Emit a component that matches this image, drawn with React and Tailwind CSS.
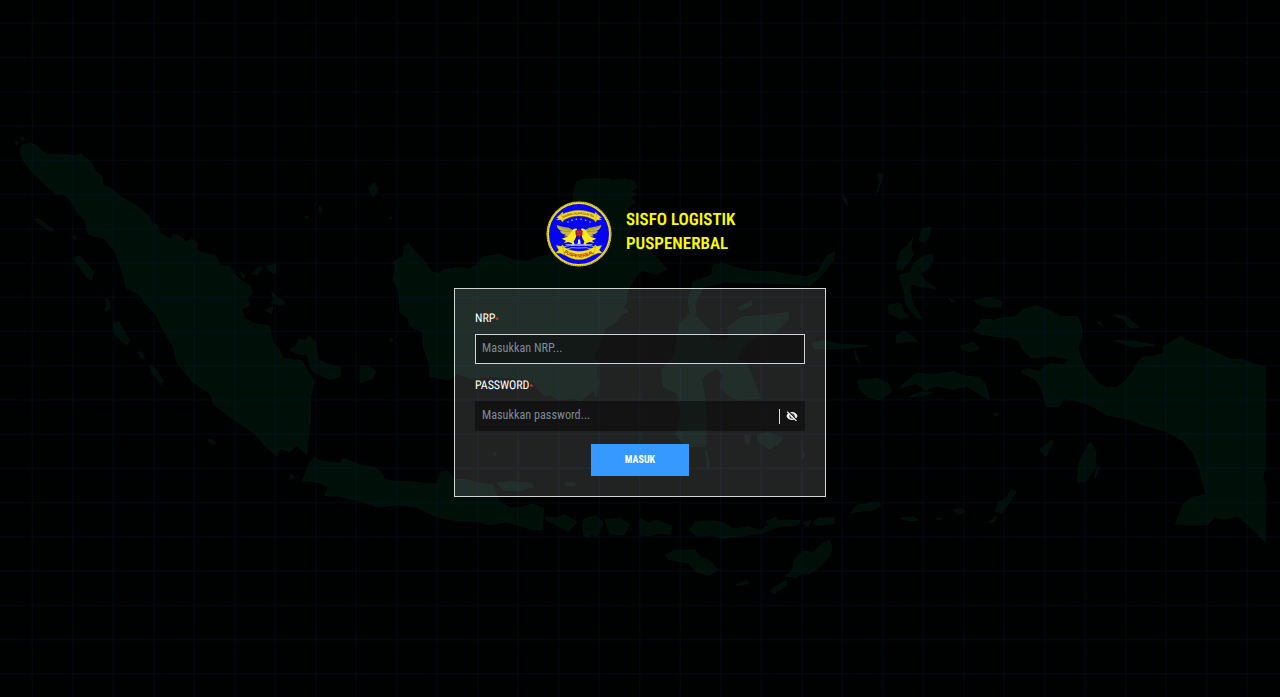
import React from "react";

const VERTICALS = Array.from({ length: 31 }, (_, i) => 32.3 + i * 40.5);
const HORIZONTALS = Array.from({ length: 20 }, (_, i) => 23.3 + i * 34.24);

/* Each region keeps its own origin; shapes inside are drawn at a third of their size. */
const REGIONS = [
  {
    name: "sumatra",
    x: 0,
    y: 120,
    shapes: [
      "M60 95L65 75L92 70L110 78L125 94L150 104L190 103L222 107L244 103L262 118L278 135L288 156L304 168L308 194L335 208L365 232L400 251L425 271L445 287L455 310L470 315L485 342L512 358L520 343L542 350L558 368L575 358L592 366L590 390L618 403L645 405L660 435L690 440L702 462L720 480L750 497L757 520L740 535L750 556L724 566L735 595L760 610L808 618L818 665L840 692L848 716L905 722L918 745L943 785L930 830L932 890L920 1003L890 975L870 995L842 985L830 1008L798 980L765 942L720 912L640 852L630 820L578 785L530 725L520 680L490 630L470 585L435 550L420 522L380 505L365 450L345 395L310 355L265 343L255 300L238 285L210 240L190 222L165 220L130 188L95 155L72 125Z",
      "M100 298L115 296L162 330L150 333Z",
      "M222 415L240 408L280 455L274 482L255 465Z",
      "M316 532L326 540L330 565L316 573L320 555Z",
      "M340 610L356 605L388 662L380 675L345 645Z",
      "M414 697L422 695L434 715L425 717Z",
      "M450 735L465 745L488 780L485 795L455 755Z",
      "M624 960L636 958L646 970L636 973Z",
      "M870 690L890 675L895 658L915 662L928 650L945 665L955 720L990 735L1022 742L1020 770L990 778L960 765L935 750L922 705L890 700Z",
      "M755 462L780 437L788 445L770 462ZM800 440L825 433L828 460L810 455ZM722 455L736 470L728 473ZM798 570L818 562L815 580ZM815 515L832 532L855 548L845 555L812 548L822 538Z",
      "M215 350L228 348L225 360ZM915 290L926 288L920 297ZM958 258L965 265L960 280ZM45 62L55 68L50 75ZM62 52L72 55L68 62Z",
    ],
  },
  {
    name: "natuna-and-kalimantan",
    x: 360,
    y: 160,
    shapes: [
      "M145 250L165 275L190 300L215 335L235 342L250 330L300 322L325 328L350 315L368 292L420 283L460 300L500 305L540 290L590 285L630 250L645 200L640 150L640 105L650 65L670 58L740 56L760 62L785 57L820 62L833 82L812 94L828 104L808 112L826 125L802 145L812 200L805 250L850 272L862 264L890 292L920 328L885 342L845 330L825 355L812 375L800 400L800 425L790 440L805 455L785 462L770 485L735 505L722 540L710 570L700 590L716 612L708 640L716 665L708 712L700 690L690 700L660 722L640 714L600 720L570 704L555 708L540 694L520 668L480 655L400 650L330 655L290 640L268 660L240 655L208 648L210 620L190 560L188 515L165 505L150 495L144 475L120 455L118 415L112 380L100 360L105 325L100 305L130 290L134 260Z",
      "M25 85L42 68L55 90L40 110Z",
      "M0 620L30 620L47 635L38 655L0 668Z",
      "M90 538L100 540L95 546ZM88 170L96 173L92 178Z",
    ],
  },
  {
    name: "sulawesi",
    x: 440,
    y: 180,
    shapes: [
      "M1185 215L1160 228L1135 275L1100 290L1040 283L1000 275L940 275L880 262L850 250L820 255L815 285L790 295L760 305L745 360L750 400L720 430L712 470L705 525L665 570L670 620L712 640L725 700L708 765L740 800L795 800L800 740L795 660L785 600L800 580L830 565L850 585L840 620L870 650L900 660L962 655L935 590L920 550L890 538L905 510L950 470L1010 455L1045 420L1045 397L990 405L905 412L862 442L870 475L830 485L808 475L810 450L768 410L765 370L790 320L860 305L930 308L1000 310L1040 310L1110 318L1145 285L1180 240Z",
      "M892 385L935 362L935 375L905 390ZM1115 490L1150 482L1200 494L1160 500L1125 508Z",
      "M915 765L930 768L925 795L917 785ZM952 765L985 758L1028 775L1012 795L990 807L955 785Z",
      "M798 810L808 850L804 870ZM1085 805L1096 825L1088 835Z",
      "M172 910L210 905L275 910L280 920L240 932L190 930ZM372 910L400 908L408 915L380 918ZM157 820L170 818L166 828Z",
    ],
  },
  {
    name: "java-and-bali",
    x: 290,
    y: 430,
    shapes: [
      "M38 153L58 100L72 82L90 92L125 98L152 100L160 85L192 98L215 108L255 112L275 130L282 148L310 155L360 155L400 160L440 162L455 124L475 124L490 148L530 148L570 160L610 165L625 215L665 235L700 232L728 222L760 235L758 300L720 297L650 275L600 284L560 273L500 272L440 260L380 232L320 224L265 231L200 210L145 198L105 197L115 170L80 155Z",
      "M765 262L800 264L825 255L860 276L835 305L800 285L772 272ZM878 285L900 282V320L882 318ZM0 132L15 140L2 148Z",
    ],
  },
  {
    name: "nusa-tenggara",
    x: 640,
    y: 490,
    shapes: [
      "M-170 88L-130 78L-110 100L-130 140L-170 120ZM-105 90L-60 85L-30 105L-50 135L-90 130Z",
      "M0 85L25 100L50 92L95 108L92 132L55 130L30 137L0 135Z",
      "M148 120L165 98L205 92L250 98L280 118L325 110L355 122L390 105L380 95L405 82L415 92L450 90L480 92L470 105L420 108L370 128L320 136L245 145L215 135L170 138Z",
      "M520 98L535 85L580 84L583 100L525 106ZM488 100L512 92L505 110Z",
      "M78 195L100 183L165 180L180 200L210 212L234 240L205 256L170 245L145 218L85 208Z",
      "M435 258L455 245L465 205L490 184L520 187L545 162L568 153L576 170L572 195L535 232L510 250L480 252L470 262ZM392 305L410 288L438 272L440 285L420 298L402 311ZM288 285L325 272L325 280L305 284Z",
      "M633 68L650 45L718 37L722 47L700 60L670 62ZM782 85L820 80L836 90L808 92ZM940 60L965 55L973 65L955 73ZM888 85L903 86L893 90Z",
      "M1045 98L1070 78L1065 92ZM1065 62L1080 35L1102 20L1112 0L1128 5L1105 42L1085 70Z",
    ],
  },
  {
    name: "maluku",
    x: 820,
    y: 160,
    shapes: [
      "M230 328L242 272L262 258L278 235L272 262L280 285L262 312L245 330Z",
      "M298 240L305 210L330 200L328 225L315 248Z",
      "M240 345L270 338L282 310L308 290L335 282L340 300L325 325L300 342L315 362L347 387L312 380L275 372L268 392L280 435L305 477L290 472L262 440L250 380L240 362Z",
      "M175 40L188 45L182 70L170 100L178 70ZM68 105L78 118L83 135L72 122Z",
      "M205 435L240 430L250 455L268 470L240 475L208 460ZM228 528L252 513L292 543L230 547Z",
      "M0 550L55 552L145 558L60 566L0 568ZM105 572L118 608L108 598Z",
      "M420 560L460 547L476 565L450 575L425 568Z",
      "M114 662L170 655L205 670L214 695L180 720L145 712L120 688Z",
      "M235 685L255 668L290 640L340 645L400 635L430 648L475 652L495 670L508 718L485 705L440 678L400 688L350 678L315 690L290 670L270 675ZM270 710L300 696L340 698L300 708Z",
      "M465 422L510 412L545 425L542 440L505 442L470 430ZM478 480L510 478L530 490L520 515L498 500ZM385 413L405 425L395 425Z",
    ],
  },
  {
    name: "papua",
    x: 1000,
    y: 290,
    shapes: [
      "M-80 120L-60 100L5 85L45 80L70 58L108 48L150 62L182 80L232 80L248 122L235 175L240 200L220 208L150 198L95 204L68 180L58 152L25 142L-5 140L-60 132Z",
      "M65 245L80 236L115 245L150 220L190 225L215 205L240 200L255 235L272 252L300 285L320 292L352 292L380 270L402 238L425 202L455 200L492 190L490 170L542 140L575 160L620 175L690 208L730 210L770 225L796 232V530L788 565L796 590V755L755 715L715 678L670 687L645 680L622 705L527 703L548 645L575 622L620 615L608 580L600 540L580 490L550 452L500 425L430 405L380 385L320 375L280 350L240 335L195 325L175 350H140L122 290L108 270Z",
      "M340 75L375 78L418 112L390 112L370 88ZM345 152L400 153L465 166L400 170ZM293 98L302 96L306 108Z",
      "M232 575L240 510L270 455L286 480L288 530L255 575ZM290 535L298 530L285 565Z",
      "M155 450L160 455L138 500L120 480ZM-20 370L-5 372L-8 380Z",
    ],
  },
];

function MapBackdrop() {
  return (
    <svg
      className="absolute inset-0"
      width="1280"
      height="697"
      viewBox="0 0 1280 697"
      aria-hidden="true"
    >
      <g fill="#010f09" stroke="#03150f" strokeWidth="2.5" strokeLinejoin="round">
        {REGIONS.map((r) => (
          <g key={r.name} transform={`translate(${r.x} ${r.y}) scale(0.33333)`}>
            {r.shapes.map((d, i) => (
              <path key={i} d={d} />
            ))}
          </g>
        ))}
      </g>
      <g stroke="#0c1a34" strokeOpacity="0.24" strokeWidth="1.6">
        {VERTICALS.map((x) => (
          <line key={x} x1={x} x2={x} y1="0" y2="697" />
        ))}
        {HORIZONTALS.map((y) => (
          <line key={y} x1="0" x2="1280" y1={y} y2={y} />
        ))}
      </g>
    </svg>
  );
}

function Emblem() {
  return (
    <svg className="size-[66px] shrink-0" viewBox="16 18 198 198" role="img">
      <circle cx="115" cy="117" r="98" fill="#6b650f" />
      <circle cx="115" cy="117" r="93.5" fill="#0404f2" stroke="#efe022" strokeWidth="7" />
      <circle cx="115" cy="117" r="95" fill="none" stroke="#8a7f18" strokeWidth="3" strokeDasharray="3 4" />
      <g fill="#f5df20" stroke="#806f00" strokeWidth="1">
        <path d="M47 68L59 58L66 50L72 73L65 82L61 75L47 75L54 70Z" />
        <path d="M183 68L171 58L164 50L158 73L165 82L169 75L183 75L176 70Z" />
        <path d="M61 59Q115 32 169 59L163 76Q115 50 67 76Z" />
      </g>
      <path id="motto-arc" d="M68 70Q115 46 162 70" fill="none" />
      <text className="font-['Liberation_Sans'] font-bold" fontSize="10" fill="#8a3a10">
        <textPath href="#motto-arc" textLength="94" lengthAdjust="spacingAndGlyphs">DHARMA JALAKACA PUTRA</textPath>
      </text>
      <g fill="#b4c6ff">
        <circle cx="82" cy="81" r="2.4" />
        <circle cx="94" cy="76" r="2.4" />
        <circle cx="107" cy="73" r="2.4" />
        <circle cx="121" cy="73" r="2.4" />
        <circle cx="135" cy="76" r="2.4" />
        <circle cx="148" cy="81" r="2.4" />
      </g>
      <g fill="#c4b93a">
        <path d="M48 90Q72 98 84 98Q96 102 100 112L92 126L70 124Q74 121 76 119Q62 118 58 109L63 108Q50 103 48 90Z" />
        <path d="M182 90Q158 98 146 98Q134 102 130 112L138 126L160 124Q156 121 154 119Q168 118 172 109L167 108Q180 103 182 90Z" />
      </g>
      <path
        d="M53 95Q76 104 91 103M61 107Q78 111 93 108M177 95Q154 104 139 103M169 107Q152 111 137 108"
        stroke="#7c7a22"
        strokeWidth="1.6"
        fill="none"
      />
      <g fill="#ffec16">
        <path d="M109 101Q96 99 91 113L80 125L63 131L76 137L69 144L83 141L94 145L91 154L102 149L99 139Q109 127 107 112Z" />
        <path d="M121 101Q134 99 139 113L150 125L167 131L154 137L161 144L147 141L136 145L139 154L128 149L131 139Q121 127 123 112Z" />
      </g>
      <path d="M104 107L115 103L126 107L125 120L115 127L105 120Z" fill="#a8122a" />
      <path d="M108 111H122M110 118H120" stroke="#d88a92" strokeWidth="1.4" />
      <path d="M112 134L118 133L120 148L109 148L112 143Z" fill="#dbe6ff" />
      <path
        d="M75 149H155M66 156Q91 147 115 152Q139 147 165 156M73 163Q94 155 115 159Q136 155 157 163"
        stroke="#a9b7ff"
        strokeWidth="2.6"
        fill="none"
      />
      <g fill="#f7e225" stroke="#806f00" strokeWidth="1">
        <path d="M46 151L61 154L66 149L73 158L72 181L59 175L45 174L54 165Z" />
        <path d="M184 151L169 154L164 149L157 158L158 181L171 175L185 174L176 165Z" />
        <path d="M65 154Q115 184 165 154L158 180Q115 209 72 180Z" />
      </g>
      <path id="name-arc" d="M70 173Q115 202 161 173" fill="none" />
      <text className="font-['Liberation_Sans'] font-bold" fontSize="15" fill="#b21d0b">
        <textPath href="#name-arc" textLength="96" lengthAdjust="spacingAndGlyphs">PUSPENERBAL</textPath>
      </text>
    </svg>
  );
}

function HiddenEyeIcon() {
  return (
    <svg className="size-3" viewBox="0 0 24 24" fill="#f2f2f2" aria-hidden="true">
      <path
        fillRule="evenodd"
        d="M12 4C7 4 2.73 7.11 1 12c1.73 4.89 6 8 11 8s9.27-3.11 11-8c-1.73-4.89-6-8-11-8Zm0 2.8a5.2 5.2 0 1 1 0 10.4 5.2 5.2 0 0 1 0-10.4Z"
      />
      <circle cx="12" cy="12" r="3.3" />
      <path d="M3.6 1.6l18.6 18.6" stroke="#141414" strokeWidth="2.6" />
      <path d="M2.2 3.2l18.6 18.6" stroke="#f2f2f2" strokeWidth="2.6" />
    </svg>
  );
}

function FieldLabel({ children }) {
  return (
    <label className="flex h-[15px] items-center text-[12px] leading-[15px] tracking-[-0.05px] text-white">
      <span>{children}</span>
      <span className="pt-[3px] text-[7px] leading-none font-bold text-[#e0402f]">*</span>
    </label>
  );
}

export default function App() {
  return (
    <main className="relative flex h-[697px] w-full justify-center overflow-hidden bg-[#000201] font-['Roboto_Condensed','Roboto',sans-serif] [font-stretch:75%] [text-rendering:geometricPrecision]">
      <MapBackdrop />
      <div className="relative flex w-[372px] flex-col pt-[201px]">
        <header className="flex h-[66px] gap-[14.5px] pl-[91.5px]">
          <Emblem />
          <h1 className="pt-[7px] text-[17px] leading-[24px] font-semibold whitespace-nowrap text-[#faff00]">
            SISFO LOGISTIK
            <br />
            PUSPENERBAL
          </h1>
        </header>
        <form
          className="mt-[21px] flex h-[209px] flex-col border border-[#d2d5d3] bg-white/13 px-5 pt-[22px]"
          onSubmit={(e) => e.preventDefault()}
        >
          <FieldLabel>NRP</FieldLabel>
          <input
            className="mt-2 h-[30px] w-full border border-[#d2d5d3] bg-black/45 px-1.5 pb-0.5 text-[12.2px] text-white outline-none placeholder:text-[#7e8a9c]"
            placeholder="Masukkan NRP..."
          />
          <div className="mt-[14px]">
            <FieldLabel>PASSWORD</FieldLabel>
          </div>
          <div className="mt-2 flex h-[30px] items-center bg-black/45 pr-[7px] pl-[7px]">
            <input
              type="password"
              className="min-w-0 flex-1 bg-transparent pb-0.5 text-[12.2px] text-white outline-none placeholder:text-[#7e8a9c]"
              placeholder="Masukkan password..."
            />
            <span className="mr-[6px] h-[15px] w-px bg-[#dedede]" />
            <HiddenEyeIcon />
          </div>
          <button className="mt-[13px] h-8 w-[98px] self-center bg-[#3699ff] pb-px text-[10px] font-bold text-white">
            MASUK
          </button>
        </form>
      </div>
    </main>
  );
}
